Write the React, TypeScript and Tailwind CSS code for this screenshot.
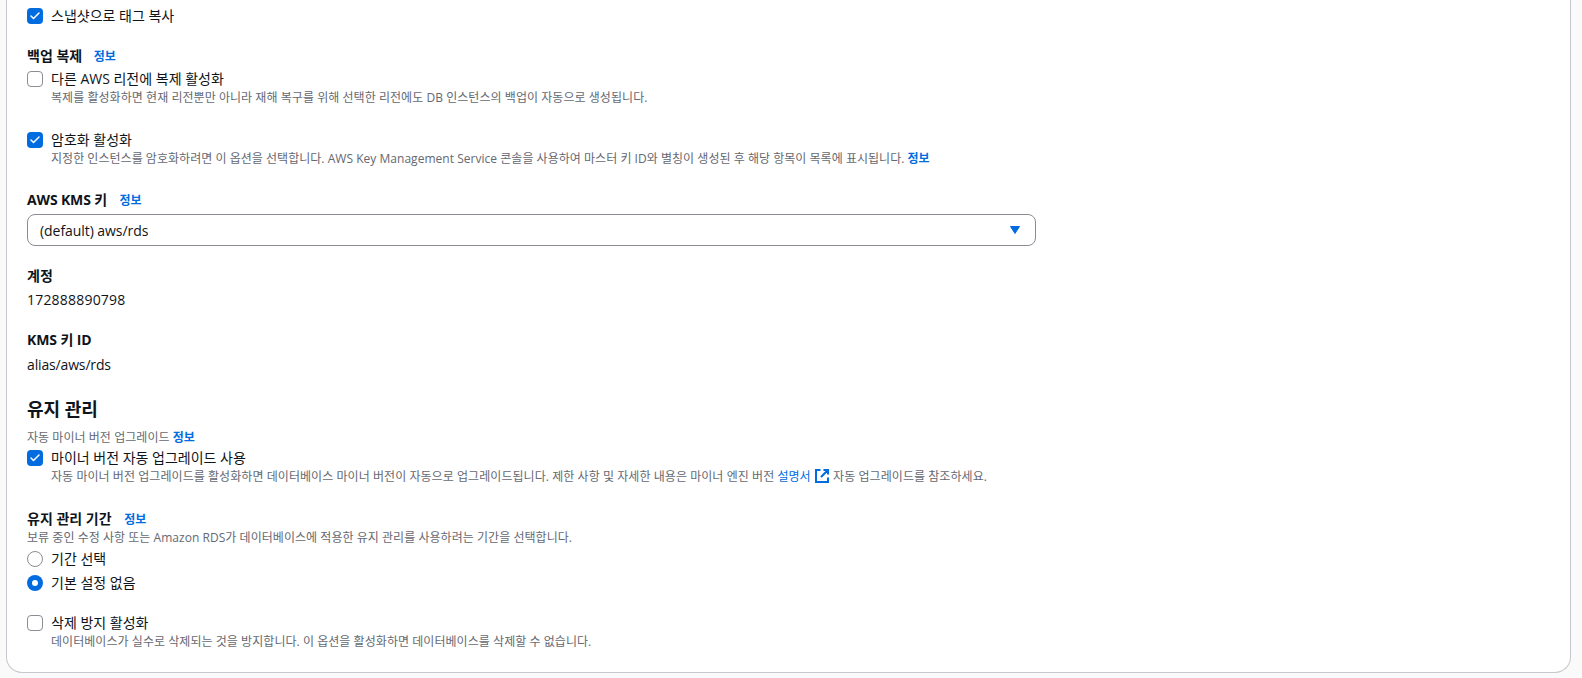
import { Check } from "lucide-react";

const FONT = "font-['Open_Sans','Noto_Sans_CJK_KR',sans-serif]";

function Info({ className = "" }: { className?: string }) {
  return <a className={`text-[12px] font-bold tracking-normal text-[#006ce0] ${className}`}>정보</a>;
}

function CheckRow({ checked, label, desc, className = "" }: { checked: boolean; label: string; desc?: React.ReactNode; className?: string }) {
  return (
    <div className={`flex gap-2 ${className}`}>
      {checked ? (
        <span className="mt-[2px] flex h-4 w-4 shrink-0 items-center justify-center rounded-[4px] bg-[#006ce0]">
          <Check className="h-3 w-3 text-white" strokeWidth={3} />
        </span>
      ) : (
        <span className="mt-[2px] h-4 w-4 shrink-0 rounded-[4px] border border-[#8c8c94] bg-white" />
      )}
      <div>
        <div className="h-5 text-[14px] leading-5 text-[#0f141a]">{label}</div>
        {desc && <div className="h-[18px] text-[12px] leading-[18px] tracking-[0.05px] text-[#656871]">{desc}</div>}
      </div>
    </div>
  );
}

function RadioRow({ checked, label, className = "" }: { checked: boolean; label: string; className?: string }) {
  return (
    <div className={`flex gap-2 ${className}`}>
      {checked ? (
        <span className="mt-[2px] flex h-4 w-4 items-center justify-center rounded-full bg-[#006ce0]">
          <span className="h-[6px] w-[6px] rounded-full bg-white" />
        </span>
      ) : (
        <span className="mt-[2px] h-4 w-4 rounded-full border border-[#8c8c94] bg-white" />
      )}
      <span className="text-[14px] leading-5 text-[#0f141a]">{label}</span>
    </div>
  );
}

function Label({ children, className = "" }: { children: React.ReactNode; className?: string }) {
  return <div className={`h-5 text-[14px] font-bold leading-5 text-[#0f141a] ${className}`}>{children}</div>;
}

export default function App() {
  return (
    <div className={`h-[678px] overflow-hidden bg-[#fafafa] pl-[6px] pr-[11px] ${FONT}`}>
      <div className="h-[673px] rounded-b-2xl border border-t-0 border-[#c6c6cd] bg-white pl-5 pt-[6px]">
        <CheckRow checked label="스냅샷으로 태그 복사" />

        <Label className="mt-[20px]">
          백업 복제 <Info className="ml-2" />
        </Label>
        <CheckRow
          checked={false}
          className="mt-[3px]"
          label="다른 AWS 리전에 복제 활성화"
          desc="복제를 활성화하면 현재 리전뿐만 아니라 재해 복구를 위해 선택한 리전에도 DB 인스턴스의 백업이 자동으로 생성됩니다."
        />
        <CheckRow
          checked
          className="mt-[23px]"
          label="암호화 활성화"
          desc={
            <span className="tracking-[0.03px]">
              지정한 인스턴스를 암호화하려면 이 옵션을 선택합니다. AWS Key Management Service 콘솔을 사용하여 마스터 키 ID와 별칭이 생성된 후 해당 항목이 목록에 표시됩니다. <Info />
            </span>
          }
        />

        <Label className="mt-[22px] tracking-[-0.15px]">
          AWS KMS 키 <Info className="ml-[9px]" />
        </Label>
        <div className="mt-1 flex h-8 w-[1009px] items-center justify-between rounded-lg border border-[#8c8c94] pl-3 pr-[15px] text-[14px] text-[#0f141a]">
          <span className="tracking-[-0.06px]">(default) aws/rds</span>
          <svg width="10" height="8" viewBox="0 0 10 8">
            <path d="M0.5 0.5h9L5 7.5z" fill="#006ce0" stroke="#006ce0" strokeLinejoin="round" />
          </svg>
        </div>

        <Label className="mt-[20px]">계정</Label>
        <div className="mt-1 h-5 text-[14px] leading-5 tracking-[0.2px] text-[#0f141a]">172888890798</div>
        <Label className="mt-[20px] tracking-[-0.1px]">KMS 키 ID</Label>
        <div className="mt-[5px] h-5 text-[14px] leading-5 tracking-[-0.15px] text-[#0f141a]">alias/aws/rds</div>

        <div className="mt-[22px] h-6 text-[18px] font-bold leading-6 text-[#0f141a]">유지 관리</div>
        <div className="mt-2 h-[18px] text-[12px] leading-[18px] tracking-[0.05px] text-[#656871]">
          자동 마이너 버전 업그레이드 <Info />
        </div>
        <CheckRow
          checked
          className="mt-[1px]"
          label="마이너 버전 자동 업그레이드 사용"
          desc={
            <span className="tracking-[0.06px]">
              자동 마이너 버전 업그레이드를 활성화하면 데이터베이스 마이너 버전이 자동으로 업그레이드됩니다. 제한 사항 및 자세한 내용은 마이너 엔진 버전{" "}
              <a className="text-[#006ce0]">설명서</a>{" "}
              <svg className="inline-block align-[-3px]" width="16" height="16" viewBox="0 0 16 16" fill="none" stroke="#006ce0" strokeWidth="2">
                <path d="M9.5 2H14V6.5M14 2L7 9M6.5 2H2V14H14V9.5" />
              </svg>{" "}
              자동 업그레이드를 참조하세요.
            </span>
          }
        />

        <Label className="mt-[23px]">
          유지 관리 기간 <Info className="ml-[9px]" />
        </Label>
        <div className="h-[18px] text-[12px] leading-[18px] tracking-[0.04px] text-[#656871]">
          보류 중인 수정 사항 또는 Amazon RDS가 데이터베이스에 적용한 유지 관리를 사용하려는 기간을 선택합니다.
        </div>
        <RadioRow checked={false} label="기간 선택" className="mt-[2px]" />
        <RadioRow checked label="기본 설정 없음" className="mt-[4px]" />
        <CheckRow
          checked={false}
          className="mt-5"
          label="삭제 방지 활성화"
          desc="데이터베이스가 실수로 삭제되는 것을 방지합니다. 이 옵션을 활성화하면 데이터베이스를 삭제할 수 없습니다."
        />
      </div>
    </div>
  );
}
